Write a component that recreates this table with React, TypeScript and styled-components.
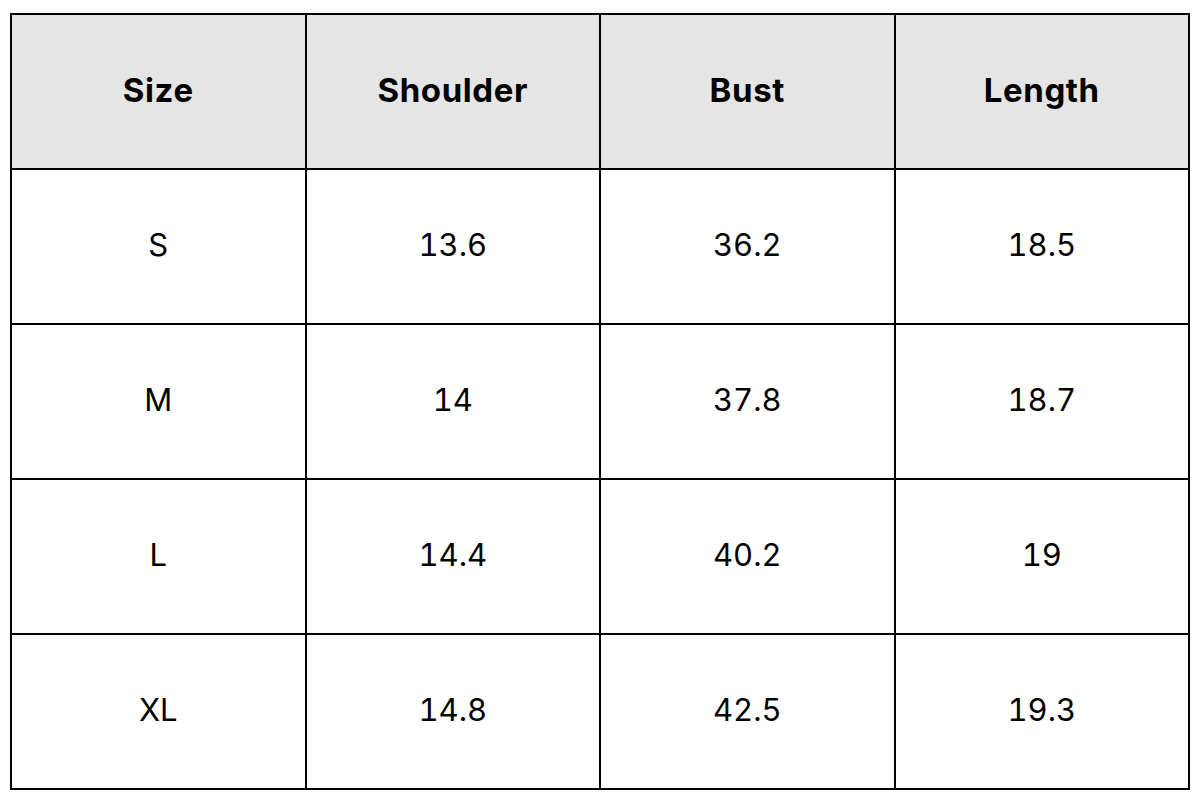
import styled, { createGlobalStyle } from 'styled-components';

const GlobalStyle = createGlobalStyle`
  html, body {
    margin: 0;
    padding: 0;
    background: #ffffff;
  }
  body {
    font-family: Inter, "Liberation Sans", sans-serif;
    color: #000000;
  }
`;

const Page = styled.div`
  width: 1200px;
  height: 800px;
  padding: 13px 10px;
  box-sizing: border-box;
`;

const Table = styled.table`
  width: 1180px;
  border-collapse: collapse;
  table-layout: fixed;
  border: 2px solid #000;
`;

const HeadCell = styled.th`
  height: 149px;
  padding: 0 0 4px;
  background: #e5e5e5;
  border: 2px solid #000;
  font-size: 33px;
  font-weight: 700;
  letter-spacing: 0.6px;
  text-align: center;
  vertical-align: middle;
`;

const Cell = styled.td`
  height: 149px;
  padding: 0 0 4px;
  border: 2px solid #000;
  font-size: 31px;
  font-weight: 400;
  font-variant-numeric: tabular-nums;
  text-align: center;
  vertical-align: middle;
`;

const headers = ['Size', 'Shoulder', 'Bust', 'Length'];

const rows = [
  ['S', '13.6', '36.2', '18.5'],
  ['M', '14', '37.8', '18.7'],
  ['L', '14.4', '40.2', '19'],
  ['XL', '14.8', '42.5', '19.3'],
];

export default function App() {
  return (
    <>
      <GlobalStyle />
      <Page>
        <Table>
          <thead>
            <tr>
              {headers.map(h => <HeadCell key={h}>{h}</HeadCell>)}
            </tr>
          </thead>
          <tbody>
            {rows.map(r => (
              <tr key={r[0]}>
                {r.map((v, i) => <Cell key={i}>{v}</Cell>)}
              </tr>
            ))}
          </tbody>
        </Table>
      </Page>
    </>
  );
}
